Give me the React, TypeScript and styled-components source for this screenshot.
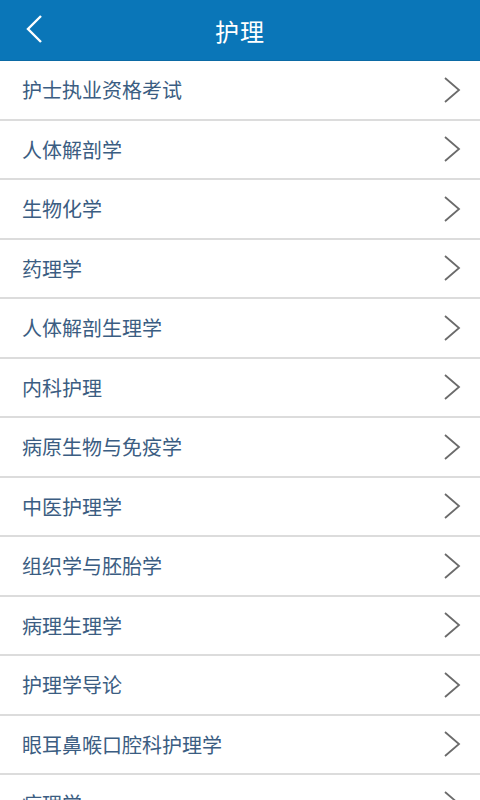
import styled, { createGlobalStyle } from "styled-components";

const GlobalStyle = createGlobalStyle`
  html, body {
    margin: 0;
    padding: 0;
    background: #ffffff;
    font-family: "Noto Sans CJK SC", "Noto Sans", sans-serif;
  }
`;

const items = [
  "护士执业资格考试",
  "人体解剖学",
  "生物化学",
  "药理学",
  "人体解剖生理学",
  "内科护理",
  "病原生物与免疫学",
  "中医护理学",
  "组织学与胚胎学",
  "病理生理学",
  "护理学导论",
  "眼耳鼻喉口腔科护理学",
  "病理学",
];

export default function App() {
  return (
    <>
      <GlobalStyle />
      <Page>
        <Header>
          <BackButton aria-label="back">
            <svg width="20" height="30" viewBox="0 0 20 30">
              <polyline points="17,2 4,15 17,28" fill="none" stroke="#ffffff" strokeWidth="2.4" />
            </svg>
          </BackButton>
          <Title>护理</Title>
        </Header>
        <List>
          {items.map((name) => (
            <Row key={name}>
              <Label>{name}</Label>
              <svg width="18" height="26" viewBox="0 0 18 26">
                <polyline points="2,1 16,13 2,25" fill="none" stroke="#6b6b6b" strokeWidth="1.8" />
              </svg>
            </Row>
          ))}
        </List>
      </Page>
    </>
  );
}

const Page = styled.div`
  width: 480px;
  height: 800px;
  overflow: hidden;
`;

const Header = styled.div`
  position: relative;
  height: 60px;
  background: #0a76b8;
  border-bottom: 1px solid #0b6aa5;
  display: flex;
  align-items: center;
  justify-content: center;
`;

const BackButton = styled.div`
  position: absolute;
  left: 24px;
  top: 14px;
  display: flex;
`;

const Title = styled.div`
  color: #ffffff;
  font-size: 24px;
  letter-spacing: 1px;
`;

const List = styled.div`
  display: flex;
  flex-direction: column;
`;

const Row = styled.div`
  height: 57.5px;
  border-bottom: 2px solid #dcdcdc;
  display: flex;
  align-items: center;
  justify-content: space-between;
  padding: 0 19px 0 22px;
  flex-shrink: 0;
`;

const Label = styled.div`
  color: #3b5d82;
  font-size: 20px;
`;
